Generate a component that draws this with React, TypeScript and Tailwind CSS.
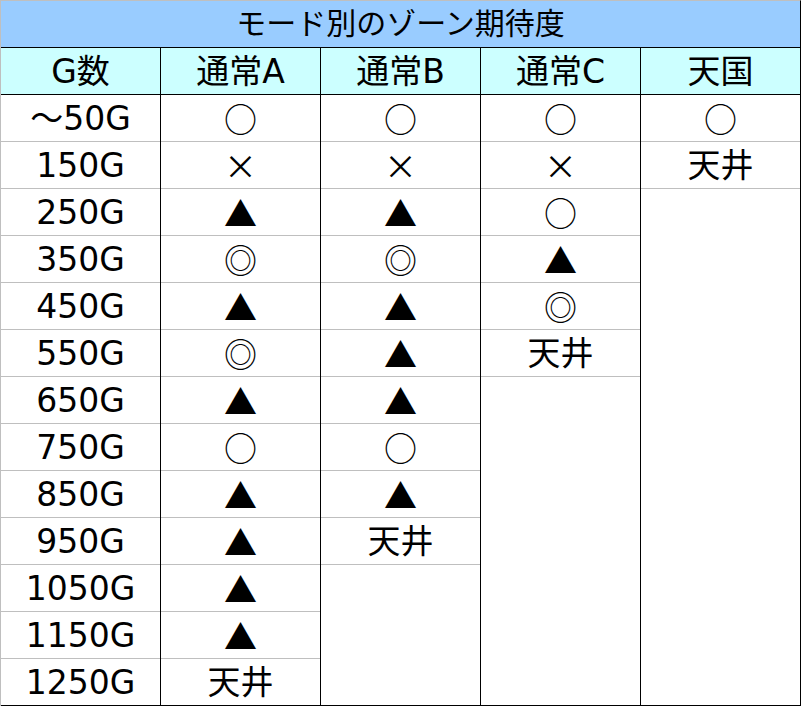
const font = "font-['DejaVu_Sans','Noto_Sans_CJK_JP',sans-serif]";

const headers = ["G数", "通常A", "通常B", "通常C", "天国"];

const rows = [
  "～50G",
  "150G",
  "250G",
  "350G",
  "450G",
  "550G",
  "650G",
  "750G",
  "850G",
  "950G",
  "1050G",
  "1150G",
  "1250G",
];

const cols: string[][] = [
  ["○", "×", "▲", "◎", "▲", "◎", "▲", "○", "▲", "▲", "▲", "▲", "天井"],
  ["○", "×", "▲", "◎", "▲", "▲", "▲", "○", "▲", "天井"],
  ["○", "×", "○", "▲", "◎", "天井"],
  ["○", "天井"],
];

function Cell({ text, last }: { text: string; last?: boolean }) {
  const sym = text.length === 1;
  return (
    <div
      className={
        "flex items-center justify-center " +
        (last ? "h-[46px]" : "h-[47px] border-b border-[#bfbfbf]")
      }
    >
      {sym ? (
        <span className="font-['Noto_Sans_CJK_JP',sans-serif] text-[33px] leading-none">{text}</span>
      ) : (
        <span className="text-[33px] leading-none">{text}</span>
      )}
    </div>
  );
}

export default function App() {
  return (
    <div className={`w-[801px] h-[706px] bg-white text-black border-l border-[#bfbfbf] ${font}`}>
      {/* Title */}
      <div className="h-[48px] bg-[#99ccff] border-t border-t-[#bfbfbf] border-b border-b-black border-r border-r-black flex items-center justify-center text-[30px] leading-none">
        モード別のゾーン期待度
      </div>

      {/* Header */}
      <div className="grid grid-cols-5 h-[47px] bg-[#ccffff] border-b border-black">
        {headers.map((h) => (
          <div key={h} className="border-r border-black flex items-center justify-center text-[33px] leading-none">
            {h}
          </div>
        ))}
      </div>

      {/* Body */}
      <div className="grid grid-cols-5 h-[611px] border-b border-black">
        <div className="border-r border-black">
          {rows.map((r, i) => (
            <Cell key={r} text={r} last={i === rows.length - 1} />
          ))}
        </div>
        {cols.map((c, ci) => (
          <div key={ci} className="border-r border-black">
            {c.map((t, i) => (
              <Cell key={i} text={t} last={i === 12} />
            ))}
          </div>
        ))}
      </div>
    </div>
  );
}
